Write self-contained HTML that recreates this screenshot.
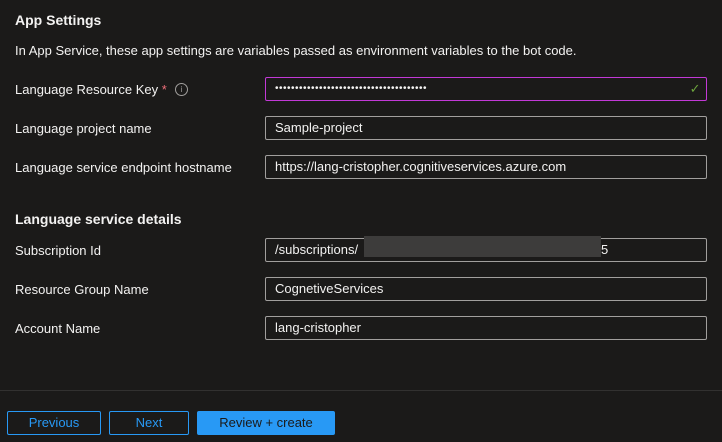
<!DOCTYPE html>
<html><head><style>
body{margin:0;width:722px;height:442px;background:#1b1a19;font-family:"Liberation Sans",sans-serif;color:#f3f2f1;position:relative;overflow:hidden}
.a{position:absolute;white-space:nowrap}
.h{font-size:14px;font-weight:bold;left:15px}
.l{font-size:13px;left:15px}
.in{position:absolute;left:265px;width:440px;height:22px;border:1px solid #a19f9d;border-radius:2px;font-size:13px;line-height:22px;padding-left:9px;box-sizing:content-box;width:431px}
.btn{position:absolute;top:411px;height:22px;border:1px solid #2899f5;border-radius:2px;font-size:13px;line-height:22px;text-align:center;color:#2899f5}
</style></head><body>
<div class="a h" style="top:12px">App Settings</div>
<div class="a l" style="top:43px">In App Service, these app settings are variables passed as environment variables to the bot code.</div>
<div class="a l" style="top:82px">Language Resource Key <span style="color:#f1707b">*</span></div>
<div class="a" style="left:175px;top:83px;width:11px;height:11px;border:1px solid #a19f9d;border-radius:50%;font-size:8px;line-height:11px;text-align:center;color:#a19f9d">i</div>
<div class="in" style="top:77px;border-color:#c239d6;font-size:10px;letter-spacing:0.5px">••••••••••••••••••••••••••••••••••••••<span style="position:absolute;right:5px;color:#6ca33d;font-size:13px">✓</span></div>
<div class="a l" style="top:121px">Language project name</div>
<div class="in" style="top:116px">Sample-project</div>
<div class="a l" style="top:160px">Language service endpoint hostname</div>
<div class="in" style="top:155px">https://lang-cristopher.cognitiveservices.azure.com</div>
<div class="a h" style="top:211px">Language service details</div>
<div class="a l" style="top:243px">Subscription Id</div>
<div class="in" style="top:238px">/subscriptions/<span style="position:absolute;left:98px;top:-3px;width:237px;height:21px;background:#3d3c3b"></span><span style="position:absolute;left:335px">5</span></div>
<div class="a l" style="top:282px">Resource Group Name</div>
<div class="in" style="top:277px">CognetiveServices</div>
<div class="a l" style="top:321px">Account Name</div>
<div class="in" style="top:316px">lang-cristopher</div>
<div class="a" style="left:0;top:390px;width:722px;height:1px;background:#323130"></div>
<div class="btn" style="left:7px;width:92px">Previous</div>
<div class="btn" style="left:109px;width:78px">Next</div>
<div class="btn" style="left:197px;width:136px;background:#2899f5;color:#1b1a19">Review + create</div>
</body></html>
